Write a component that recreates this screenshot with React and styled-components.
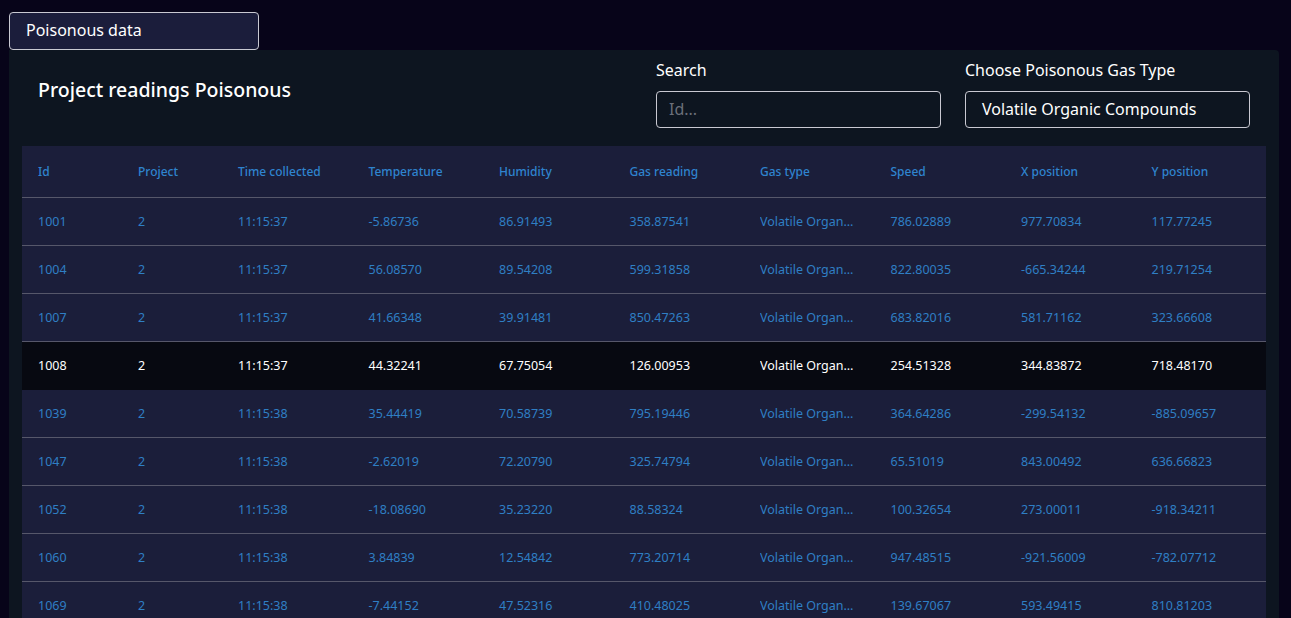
import styled, {createGlobalStyle} from "styled-components";

const readings = [
  {id: 1001, project: 2, time: "11:15:37", temperature: "-5.86736", humidity: "86.91493", gas: "358.87541", speed: "786.02889", x: "977.70834", y: "117.77245"},
  {id: 1004, project: 2, time: "11:15:37", temperature: "56.08570", humidity: "89.54208", gas: "599.31858", speed: "822.80035", x: "-665.34244", y: "219.71254"},
  {id: 1007, project: 2, time: "11:15:37", temperature: "41.66348", humidity: "39.91481", gas: "850.47263", speed: "683.82016", x: "581.71162", y: "323.66608"},
  {id: 1008, project: 2, time: "11:15:37", temperature: "44.32241", humidity: "67.75054", gas: "126.00953", speed: "254.51328", x: "344.83872", y: "718.48170", selected: true},
  {id: 1039, project: 2, time: "11:15:38", temperature: "35.44419", humidity: "70.58739", gas: "795.19446", speed: "364.64286", x: "-299.54132", y: "-885.09657"},
  {id: 1047, project: 2, time: "11:15:38", temperature: "-2.62019", humidity: "72.20790", gas: "325.74794", speed: "65.51019", x: "843.00492", y: "636.66823"},
  {id: 1052, project: 2, time: "11:15:38", temperature: "-18.08690", humidity: "35.23220", gas: "88.58324", speed: "100.32654", x: "273.00011", y: "-918.34211"},
  {id: 1060, project: 2, time: "11:15:38", temperature: "3.84839", humidity: "12.54842", gas: "773.20714", speed: "947.48515", x: "-921.56009", y: "-782.07712"},
  {id: 1069, project: 2, time: "11:15:38", temperature: "-7.44152", humidity: "47.52316", gas: "410.48025", speed: "139.67067", x: "593.49415", y: "810.81203"},
];

const columns = [
  "Id",
  "Project",
  "Time collected",
  "Temperature",
  "Humidity",
  "Gas reading",
  "Gas type",
  "Speed",
  "X position",
  "Y position",
];

export default function App() {
  return (
    <>
      <GlobalStyle />
      <Page>
        <TabButton>Poisonous data</TabButton>
        <Panel>
          <PanelHeader>
            <Title>Project readings Poisonous</Title>
            <Controls>
              <Field>
                <Label htmlFor="search">Search</Label>
                <SearchInput id="search" placeholder="Id..." />
              </Field>
              <Field>
                <Label htmlFor="gastype">Choose Poisonous Gas Type</Label>
                <SelectBox id="gastype">Volatile Organic Compounds</SelectBox>
              </Field>
            </Controls>
          </PanelHeader>
          <Table>
            <colgroup>
              <col style={{width: 100}} />
              <col style={{width: 100}} />
              {columns.slice(2).map(c => (
                <col key={c} />
              ))}
            </colgroup>
            <thead>
              <tr>
                {columns.map(c => (
                  <HeadCell key={c}>{c}</HeadCell>
                ))}
              </tr>
            </thead>
            <tbody>
              {readings.map(r => (
                <Row key={r.id} $selected={r.selected}>
                  <Cell>{r.id}</Cell>
                  <Cell>{r.project}</Cell>
                  <Cell>{r.time}</Cell>
                  <Cell>{r.temperature}</Cell>
                  <Cell>{r.humidity}</Cell>
                  <Cell>{r.gas}</Cell>
                  <Cell>
                    <Truncate>Volatile Organic Compounds</Truncate>
                  </Cell>
                  <Cell>{r.speed}</Cell>
                  <Cell>{r.x}</Cell>
                  <Cell>{r.y}</Cell>
                </Row>
              ))}
            </tbody>
          </Table>
        </Panel>
      </Page>
    </>
  );
}

const GlobalStyle = createGlobalStyle`
  body {
    margin: 0;
    background: #070419;
    font-family: "Noto Sans", "Open Sans", sans-serif;
    color: #ffffff;
    overflow: hidden;
  }
`;
const Page = styled.div`
  padding: 12px 0 0 9px;
`;
const TabButton = styled.button`
  display: block;
  width: 250px;
  height: 38px;
  padding: 0 16px 2px 16px;
  text-align: left;
  background: #1b1d3b;
  color: #ffffff;
  border: 1px solid #c9c9d2;
  border-radius: 4px;
  font-family: inherit;
  font-size: 16px;
`;
const Panel = styled.div`
  width: 1270px;
  box-sizing: border-box;
  padding: 0 13px;
  background: #0d1520;
  border-radius: 0 4px 0 0;
`;
const PanelHeader = styled.div`
  display: flex;
  justify-content: space-between;
  height: 96px;
  box-sizing: border-box;
  padding: 10px 16px 0 16px;
`;
const Title = styled.h2`
  margin: 18px 0 0 0;
  font-size: 19.5px;
  line-height: 24px;
  font-weight: 500;
`;
const Controls = styled.div`
  display: flex;
  gap: 24px;
`;
const Field = styled.div`
  display: flex;
  flex-direction: column;
`;
const Label = styled.label`
  font-size: 16px;
  line-height: 20px;
  margin-bottom: 11px;
`;
const SearchInput = styled.input`
  width: 285px;
  height: 37px;
  box-sizing: border-box;
  padding: 0 12px 2px 12px;
  background: transparent;
  border: 1px solid #c9c9d2;
  border-radius: 4px;
  color: #ffffff;
  font-family: inherit;
  font-size: 16px;
  &::placeholder {
    color: #6b6f7a;
  }
`;
const SelectBox = styled.div`
  width: 285px;
  height: 37px;
  box-sizing: border-box;
  padding: 0 16px 2px 16px;
  display: flex;
  align-items: center;
  border: 1px solid #c9c9d2;
  border-radius: 4px;
  font-size: 16px;
`;
const Table = styled.table`
  width: 100%;
  table-layout: fixed;
  border-collapse: collapse;
  background: #1b1e3a;
`;
const HeadCell = styled.th`
  height: 51px;
  padding: 0 0 0 16px;
  text-align: left;
  font-size: 12px;
  font-weight: 500;
  color: #2f84cf;
  border-bottom: 1px solid #56576a;
`;
const Row = styled.tr`
  background: ${p => (p.$selected ? "#070911" : "transparent")};
  color: ${p => (p.$selected ? "#ffffff" : "#2f7fc4")};
  & td {
    border-bottom: 1px solid ${p => (p.$selected ? "#070911" : "#56576a")};
  }
`;
const Cell = styled.td`
  height: 47px;
  padding: 0 0 0 16px;
  font-size: 12.5px;
  white-space: nowrap;
  overflow: hidden;
`;
const Truncate = styled.span`
  display: block;
  max-width: 94px;
  overflow: hidden;
  text-overflow: ellipsis;
  white-space: nowrap;
`;
